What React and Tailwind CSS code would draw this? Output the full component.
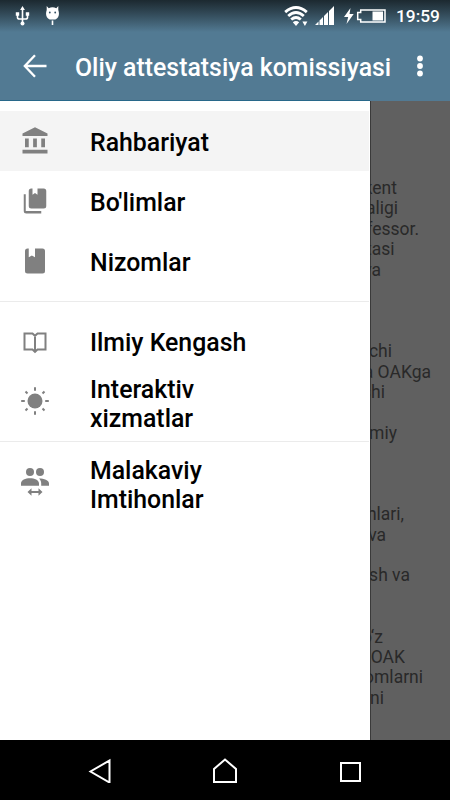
import React from "react";
import { MdAccountBalance } from "react-icons/md";

const font = "font-['Roboto','Liberation_Sans',sans-serif]";

function Glyph({ d }) {
  return (
    <svg viewBox="0 0 24 24" className="size-[30px] fill-[#808080]">
      <path d={d} />
    </svg>
  );
}

const BookMultiple = () => (
  <Glyph d="M19 18H9a2 2 0 0 1-2-2V4a2 2 0 0 1 2-2h1v5l2-1.5L14 7V2h5a2 2 0 0 1 2 2v12a2 2 0 0 1-2 2M17 20v2H5a2 2 0 0 1-2-2V6.500h1.600V20z" />
);
const Book = () => (
  <Glyph d="M18 22a2 2 0 0 0 2-2V4a2 2 0 0 0-2-2h-6v7L9.500 7.500 7 9V2H6a2 2 0 0 0-2 2v16a2 2 0 0 0 2 2z" />
);
const BookOpen = () => (
  <svg viewBox="0 0 30 30" className="size-[30px] fill-none stroke-[#808080]" strokeWidth="2">
    <path d="M4.500 6.500h8L15 8.800l2.500-2.300h8v16h-8L15 24.800l-2.500-2.300h-8zM15 8.800v16" />
  </svg>
);
const Sun = () => (
  <svg viewBox="0 0 30 30" className="size-[30px] fill-[#808080] stroke-[#808080]" strokeWidth="2">
    <circle cx="15" cy="15" r="7.500" stroke="none" />
    <path d="M15 1.200v3.600M15 25.200v3.600M1.200 15h3.600M25.200 15h3.600M5.500 5.500l2 2M22.500 22.500l2 2M5.500 24.500l2-2M22.500 7.500l2-2" />
  </svg>
);
const People = () => (
  <svg viewBox="0 0 30 30" className="size-[30px] fill-[#808080]">
    <circle cx="10" cy="6" r="4" />
    <circle cx="20" cy="6" r="4" />
    <path d="M1 19.800v-2.300c0-3.300 4.500-5.200 9-5.200s9 1.900 9 5.200v2.300zM19 12.500c5 0 10 1.700 10 5v2.300h-7.800v-2.300c0-2-.8-3.700-2.200-5zM7.500 26l4-3.800v2.900h7v-2.900l4 3.800-4 3.800v-2.900h-7v2.900z" />
  </svg>
);

function Item({ icon, children, className = "h-[60px]", labelClass = "pt-0.5" }) {
  return (
    <div className={`flex items-center pl-5 ${className}`}>
      <span className="flex w-[70px] shrink-0">{icon}</span>
      <span className={`text-[24.850px] font-medium leading-[29px] text-black ${labelClass}`}>{children}</span>
    </div>
  );
}

function StatusBar() {
  return (
    <div className="flex h-8 items-center bg-linear-to-b from-[#1c2930] to-[#527a93] text-white">
      <svg viewBox="0 0 14 20" className="ml-[15px] h-5 w-[15px] fill-white stroke-white" strokeWidth="1.600">
        <path fill="none" d="M7 2v15M2 8v3.500q0 1.500 2 1.500h6q2 0 2-1.500V8" />
        <path stroke="none" d="M7 0l2.400 4H4.600zM.3 6.300h3.400v3.400H.3zM10.300 6.300h3.400v3.400h-3.400z" />
        <circle cx="7" cy="17.500" r="2" stroke="none" />
      </svg>
      <svg viewBox="0 0 14 20" className="ml-[15px] h-5 w-[15px] fill-white">
        <path d="M1.200 0l2 2.200Q7 .5 10.800 2.200l2-2.200v4q2.200 7-3 9.500H4.200Q-1 11 1.200 4zM6.200 14.500h1.600V19H6.200z" />
        <circle cx="4.300" cy="6.500" r=".9" className="fill-[#345064]" />
        <circle cx="9.700" cy="6.500" r=".9" className="fill-[#345064]" />
      </svg>
      <div className="flex-1" />
      <svg viewBox="0 0 24 20" className="h-5 w-6 fill-none stroke-white" strokeWidth="2.900">
        <path d="M1.200 6.200Q12-3 22.800 6.200M4.200 10Q12 3.200 19.800 10M7.200 13.500Q12 9.500 16.800 13.500" />
        <path stroke="none" className="fill-white" d="M8.800 16.200Q12 13.700 15.200 16.200L12 20zM18.400 15.500h5L20.900 20z" />
      </svg>
      <svg viewBox="0 0 19 20" className="ml-[7px] h-5 w-[19px] fill-white">
        <path d="M0 19l3.500-3.500V19zM4.500 14.500L8 11v8H4.500zM9 10l4-4v13H9zM14 5l5-5v19h-5z" />
      </svg>
      <svg viewBox="0 0 42 16" className="ml-[10px] h-4 w-[42px]">
        <path className="fill-white" d="M6.500 0L0 9h4.200L2.500 16l7.200-10H5.500z" />
        <path className="fill-none stroke-white" strokeWidth="1.500" d="M16.700 2H41v12H16.700v-2.500h-3v-7h3z" />
        <path className="fill-white" d="M28.500 3.500H39v9H28.500z" />
      </svg>
      <span className="ml-[10px] mr-2.5 w-11 whitespace-nowrap text-[17.300px] font-medium leading-8">19:59</span>
    </div>
  );
}

function Line({ children, className }) {
  return (
    <div className={`flex h-[20.400px] justify-end overflow-hidden whitespace-nowrap ${className}`}>
      {children}
    </div>
  );
}

export default function App() {
  return (
    <div className={`flex h-[800px] w-[450px] flex-col overflow-hidden ${font}`}>
      <header className="flex h-[101px] shrink-0 flex-col bg-[#527a93]">
        <StatusBar />
        <div className="flex h-[68px] items-center">
          <svg viewBox="0 0 24 24" className="ml-[23px] size-6 fill-none stroke-white" strokeWidth="2.300">
            <path d="M12 1.200L1.800 12 12 22.800M1.800 12H23.500" />
          </svg>
          <h1 className="ml-7 w-[330px] whitespace-nowrap pt-[3px] text-[24.850px] font-medium leading-8 text-white">
            Oliy attestatsiya komissiyasi
          </h1>
          <svg viewBox="0 0 6 22" className="ml-3 h-[22px] w-1.5 fill-white">
            <circle cx="3" cy="3.500" r="2.900" />
            <circle cx="3" cy="11" r="2.900" />
            <circle cx="3" cy="18.500" r="2.900" />
          </svg>
        </div>
        <div className="h-px w-[370px] bg-[#28688a]" />
      </header>

      <main className="flex h-[639px] shrink-0 bg-[#606060]">
        <nav className="w-[370px] shrink-0 bg-white pt-2.5">
          <Item icon={<MdAccountBalance className="size-[30px] text-[#808080]" />} className="mr-px h-[60px] bg-[#f4f4f4]">
            Rahbariyat
          </Item>
          <Item icon={<BookMultiple />}>Bo'limlar</Item>
          <Item icon={<Book />}>Nizomlar</Item>
          <div className="mr-px mt-2.5 h-px bg-[#ebebeb]" />
          <div className="h-2.5" />
          <Item icon={<BookOpen />} labelClass="pt-px">Ilmiy Kengash</Item>
          <Item icon={<Sun />} className="h-[58px]" labelClass="pt-1.5">
            Interaktiv
            <br />
            xizmatlar
          </Item>
          <div className="mr-px mt-[11px] h-px bg-[#ebebeb]" />
          <div className="h-[9px]" />
          <Item icon={<People />} labelClass="pt-2">
            Malakaviy
            <br />
            Imtihonlar
          </Item>
        </nav>
        <div className="flex-1 pt-[77px] text-[17.500px] leading-[20.400px] text-[#292929] shadow-[inset_1px_0_0_#3a3a3a]">
          <Line className="w-[27px]">Toshkent</Line>
          <Line className="w-[28px]">aligi</Line>
          <Line className="w-[49px]">professor.</Line>
          <Line className="w-[24.500px]">tasi</Line>
          <Line className="w-[11px]">va</Line>
          <div className="h-[61.200px]" />
          <Line className="w-[22px]">chi</Line>
          <Line className="w-[61px]">va OAKga</Line>
          <Line className="w-[15px]">shi</Line>
          <div className="h-[20.400px]" />
          <Line className="w-[27px]">ilmiy</Line>
          <div className="h-[61.200px]" />
          <Line className="w-[34px]">hlari,</Line>
          <Line className="w-[16px]">va</Line>
          <div className="h-[20.400px]" />
          <Line className="w-[40px]">sh va</Line>
          <div className="h-[40.800px]" />
          <Line className="w-[13px]">o‘z</Line>
          <Line className="w-[35px]">OAK</Line>
          <Line className="w-[53px]">omlarni</Line>
          <Line className="w-[14px]">rni</Line>
        </div>
      </main>

      <footer className="flex h-[60px] shrink-0 items-center bg-black">
        <svg viewBox="0 0 24 26" className="ml-[88px] h-[26px] w-6 fill-none stroke-white" strokeWidth="2">
          <path d="M21.500 3.500v22L2.500 14.500z" />
        </svg>
        <svg viewBox="0 0 26 26" className="ml-[100px] size-[26px] fill-none stroke-white" strokeWidth="2">
          <path d="M2 25V12L13 2.500 24 12v13z" />
        </svg>
        <div className="ml-[102px] mt-1 h-5 w-[21px] border-2 border-white" />
      </footer>
    </div>
  );
}
